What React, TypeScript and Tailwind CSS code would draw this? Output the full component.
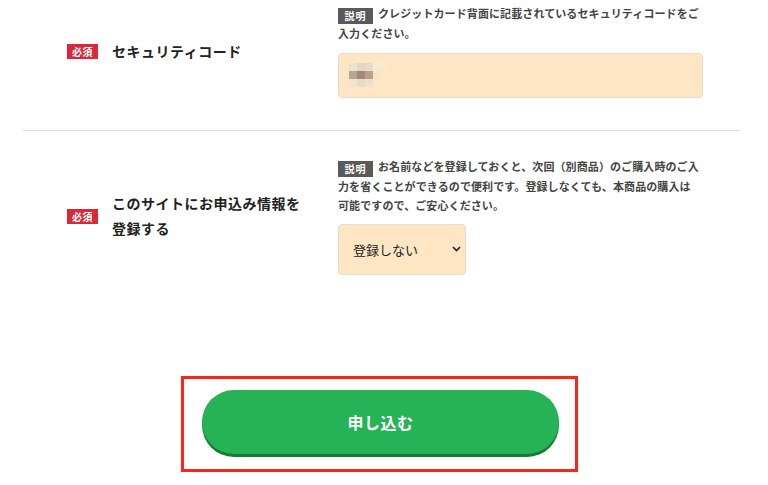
import { useState } from "react";

const mosaic = [
  ["#ece2d2", "#e6d7c2", "#e9dbc6", "#f6ead6", "#fde8c8"],
  ["#b9a68f", "#9f8a75", "#b7a38b", "#f7e4c6", "#fee6c4"],
  ["#f1e4d0", "#eadbc6", "#efe0ca", "#fbe8cc", "#fee6c4"],
];

function Required() {
  return (
    <span className="inline-block w-[31px] h-[15px] shrink-0 bg-[#d8283a] text-white text-[10px] leading-[15px] font-bold text-center tracking-[0.5px]">
      必須
    </span>
  );
}

function Note() {
  return (
    <span className="inline-block w-[35px] h-[16px] mr-[5px] bg-[#5a5a5a] text-white text-[10px] leading-[16px] font-bold text-center tracking-[1px] align-[-2px]">
      説明
    </span>
  );
}

export default function App() {
  const [save, setSave] = useState("no");

  return (
    <div className="w-[768px] h-[485px] overflow-hidden bg-white font-['Noto_Sans_CJK_JP','Noto_Sans',sans-serif]">
      <div className="ml-[23px] mr-[28px]">
        {/* セキュリティコード */}
        <div className="flex items-center border-b border-[#dcdcdc] pt-[4px] pb-[32px]">
          <div className="w-[315px] pl-[44px] flex items-center gap-[14px]">
            <Required />
            <span className="text-[14px] leading-[25px] font-bold text-[#222] tracking-[0.5px]">
              セキュリティコード
            </span>
          </div>
          <div className="w-[364px] flex flex-col">
            <p className="text-[11px] leading-[19px] font-bold text-[#444] tracking-[0.1px]">
              <Note />
              クレジットカード背面に記載されているセキュリティコードをご入力ください。
            </p>
            <div className="mt-[10px] w-[365px] h-[45px] rounded-[4px] border border-[#e6ddd0] bg-[#fee6c4] pl-[10px] pt-[9px]">
              <div className="flex flex-col">
                {mosaic.map((row, i) => (
                  <div key={i} className="flex">
                    {row.map((c, j) => (
                      <div key={j} className="w-[8px] h-[8px]" style={{ background: c }} />
                    ))}
                  </div>
                ))}
              </div>
            </div>
          </div>
        </div>

        {/* 情報登録 */}
        <div className="flex items-center pt-[26px]">
          <div className="w-[315px] pl-[44px] flex items-center gap-[14px]">
            <Required />
            <span className="text-[14px] leading-[25px] font-bold text-[#222] tracking-[0.5px]">
              このサイトにお申込み情報を
              <br />
              登録する
            </span>
          </div>
          <div className="w-[364px] flex flex-col">
            <p className="text-[11px] leading-[19px] font-bold text-[#444] tracking-[0.1px]">
              <Note />
              お名前などを登録しておくと、次回（別商品）のご購入時のご入力を省くことができるので便利です。登録しなくても、本商品の購入は
              <br />
              可能ですので、ご安心ください。
            </p>
            <div className="relative mt-[9px] w-[128px] h-[51px]">
              <select
                value={save}
                onChange={(e) => setSave(e.target.value)}
                className="appearance-none w-full h-full rounded-[4px] border border-[#e6ddd0] bg-[#fee6c4] pl-[14px] text-[13px] text-[#222] outline-none"
              >
                <option value="no">登録しない</option>
                <option value="yes">登録する</option>
              </select>
              <svg
                className="absolute right-[5px] top-[22px] pointer-events-none"
                width="9"
                height="6"
                viewBox="0 0 9 6"
                fill="none"
              >
                <path d="M1 1l3.5 3.5L8 1" stroke="#222" strokeWidth="1.6" />
              </svg>
            </div>
          </div>
        </div>
      </div>

      {/* 申し込むボタン */}
      <div className="mt-[101px] ml-[181px] w-[397px] h-[96px] border-[3px] border-[#ff2418] pt-[11px] pl-[18px]">
        <button className="w-[357px] h-[64px] rounded-full bg-[#26b256] shadow-[0_3px_0_#187a33] text-white text-[16px] font-bold tracking-[0.5px]">
          申し込む
        </button>
      </div>
    </div>
  );
}
